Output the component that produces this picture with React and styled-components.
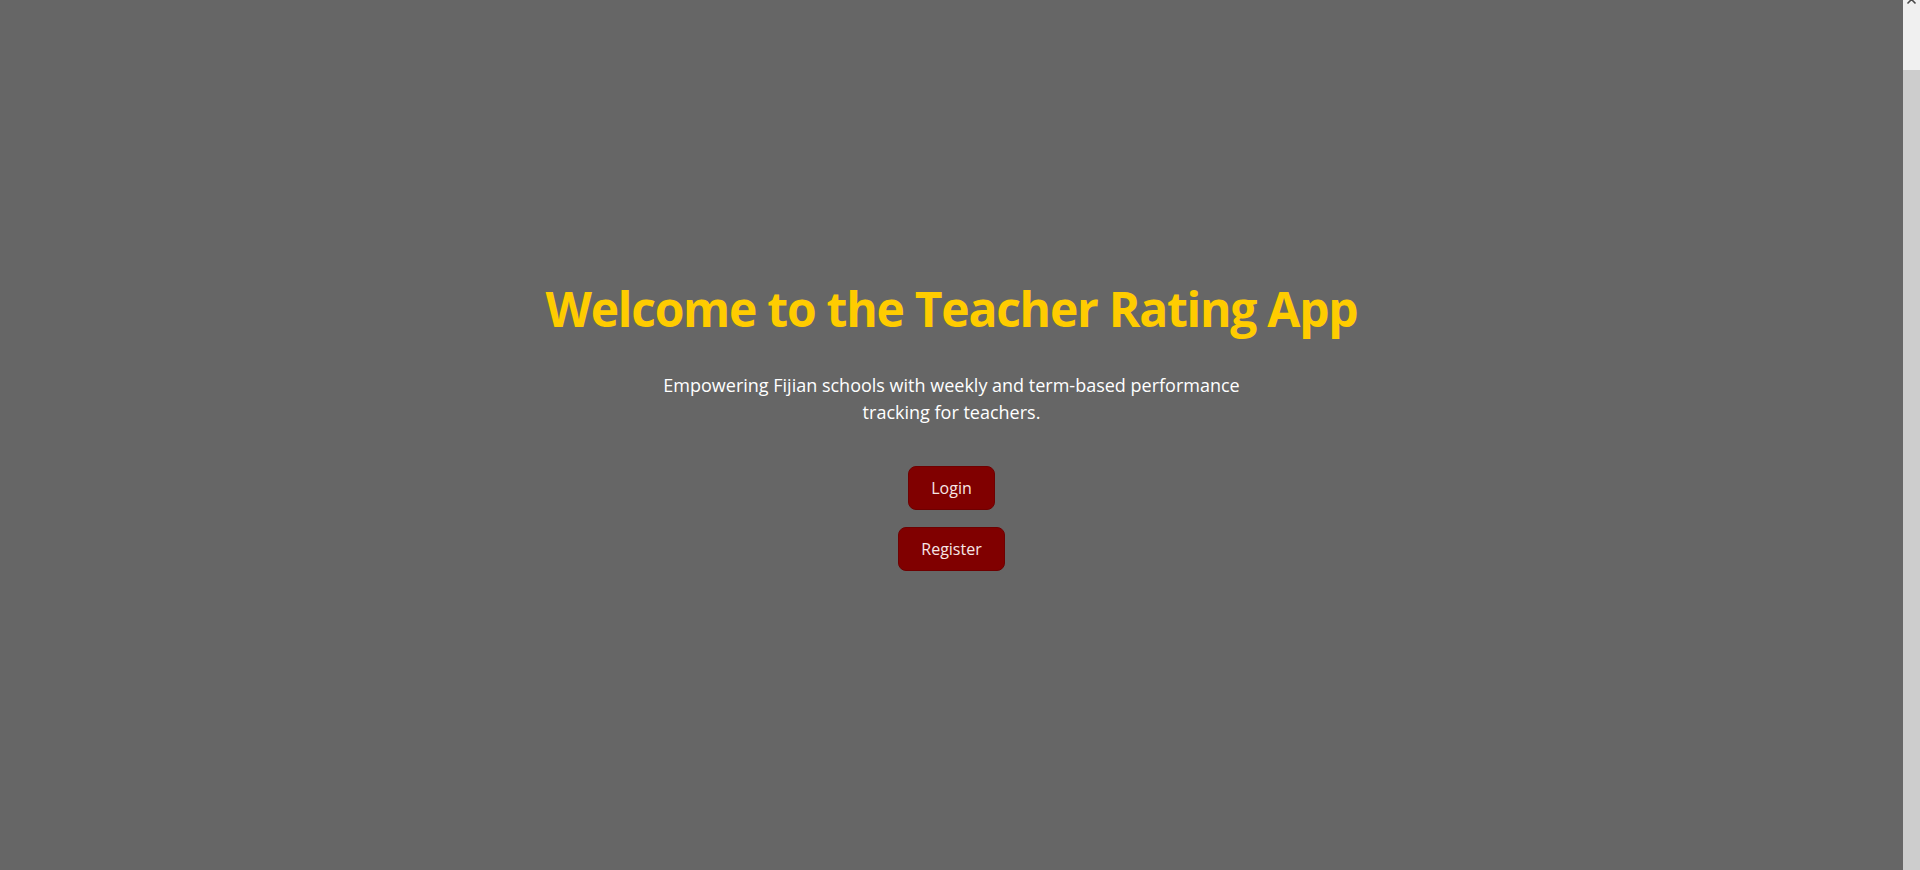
import React from 'react';
import styled, { createGlobalStyle } from 'styled-components';

const GlobalStyle = createGlobalStyle`
html, body{
    margin: 0;
    background: #666666;
    font-family: "Open Sans", "Noto Sans", Arial, sans-serif;
}
`

const Home = () => {
    return (
        <Shell>
            <GlobalStyle />
            <Page>
                <Title>Welcome to the Teacher Rating App</Title>
                <Intro>
                    Empowering Fijian schools with weekly and term-based performance
                    tracking for teachers.
                </Intro>
                <Actions>
                    <ActionButton>Login</ActionButton>
                    <ActionButton>Register</ActionButton>
                </Actions>
            </Page>
            <Rail>
                <svg width="17" height="70" viewBox="0 0 17 70">
                    <path d="M4.5 3.5 L8.5 -0.5 L12.5 3.5" fill="none" stroke="#4a4a4a" strokeWidth="1.6" />
                </svg>
                <Thumb />
            </Rail>
        </Shell>
    )
}

const Shell = styled.div`
display: flex;
height: 100vh;
overflow: hidden;
`
const Page = styled.main`
flex: 1;
min-height: 100vh;
margin: 8px;
display: flex;
flex-direction: column;
align-items: center;
justify-content: center;
text-align: center;
padding-bottom: 35px;
box-sizing: border-box;
`
const Title = styled.h1`
color: #ffcc00;
font-size: 48px;
font-weight: 700;
line-height: 1.2;
margin: 0 0 35px;
letter-spacing: -1.25px;
`
const Intro = styled.p`
color: #ffffff;
font-size: 18px;
line-height: 27px;
max-width: 600px;
margin: 0 0 40px;
`
const Actions = styled.div`
display: flex;
flex-direction: column;
align-items: center;
gap: 17px;
`
const ActionButton = styled.button`
background: #800000;
color: #f6e6e6;
border: 1px solid #6e0000;
border-radius: 8px;
padding: 0 22px;
height: 44px;
font-family: inherit;
font-size: 16px;
cursor: pointer;
`
const Rail = styled.div`
width: 17px;
flex-shrink: 0;
height: 100vh;
background: #f0f0f0;
display: flex;
flex-direction: column;
svg{
    display: block;
    flex-shrink: 0;
}
`
const Thumb = styled.div`
flex: 1;
background: #cdcdcd;
`

export default Home
